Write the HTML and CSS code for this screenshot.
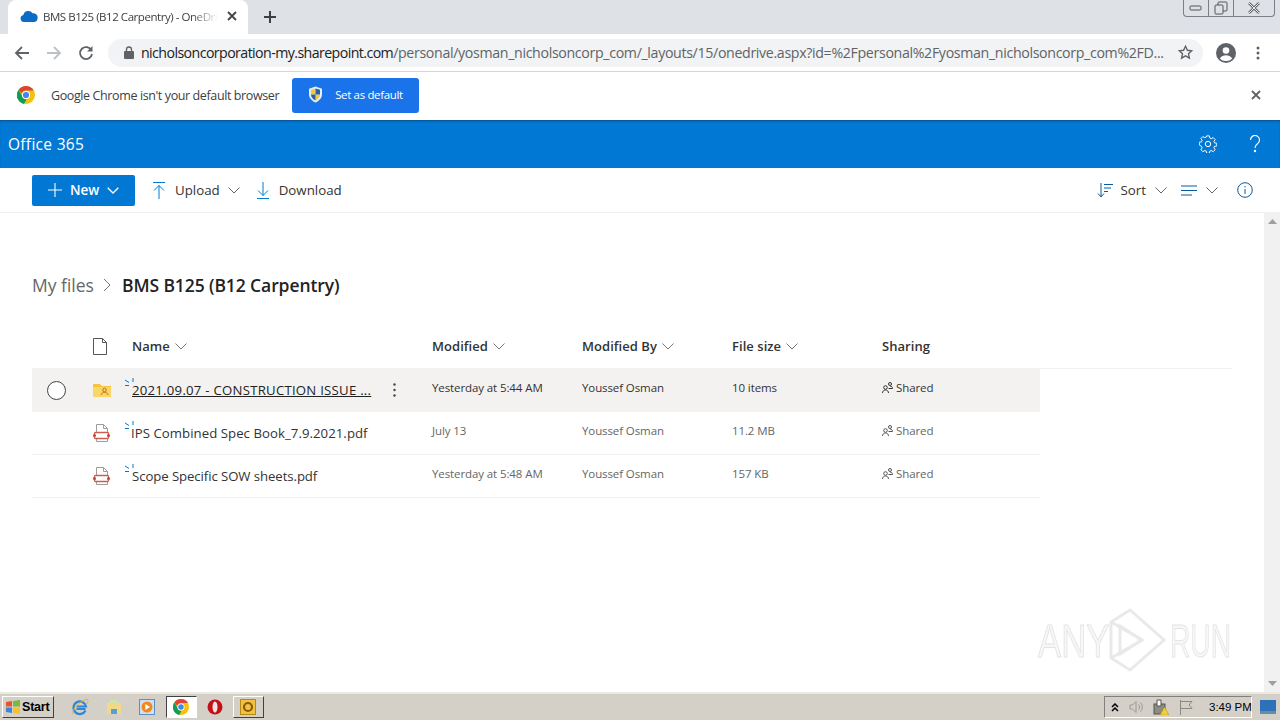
FILE: index.html
```html
<!DOCTYPE html>
<html lang="en">
  <head>
    <meta charset="UTF-8" />
    <title>BMS B125 (B12 Carpentry) - OneDrive</title>
    <link rel="stylesheet" href="styles.css">
  </head>
  <body>
    <div class="browser">
      <div class="tabbar">
        <div class="tab">
          <svg class="tab-icon" width="18" height="12" viewBox="0 0 18 12"><path d="M4 12a3.6 3.6 0 0 1-.6-7.1A5 5 0 0 1 12.500 3.200 4.400 4.400 0 0 1 17.500 8.500 3.500 3.500 0 0 1 14.500 12z" fill="#0a6cc4"/></svg>
          <span class="tab-title">BMS B125 (B12 Carpentry) - OneDrive</span>
          <svg class="tab-close" width="10" height="10" viewBox="0 0 10 10"><path d="M1 1l8 8M9 1l-8 8" stroke="#444" stroke-width="1.800"/></svg>
        </div>
        <svg class="tab-new" width="14" height="14" viewBox="0 0 14 14"><path d="M7 1v12M1 7h12" stroke="#3c4043" stroke-width="2"/></svg>
        <div class="win-buttons">
          <span class="win-btn min"><svg width="14" height="8" viewBox="0 0 14 8"><rect x="1" y="2" width="11" height="4" rx="1" fill="none" stroke="#555"/></svg></span>
          <span class="win-btn restore"><svg width="14" height="14" viewBox="0 0 14 14"><rect x="4" y="1" width="9" height="9" rx="1" fill="none" stroke="#555"/><rect x="1" y="4" width="8" height="9" rx="1" fill="#dee1e6" stroke="#555"/></svg></span>
          <span class="win-btn close"><svg width="14" height="12" viewBox="0 0 14 12"><path d="M2 1l10 10M12 1L2 11" stroke="#666" stroke-width="2.500"/><path d="M2 1l10 10M12 1L2 11" stroke="#eee" stroke-width="1"/></svg></span>
        </div>
      </div>
      <div class="toolbar">
        <svg class="nav-btn" width="16" height="14" viewBox="0 0 16 14"><path d="M15 7H2M8 1L2 7l6 6" fill="none" stroke="#5f6368" stroke-width="1.800"/></svg>
        <svg class="nav-btn" width="16" height="14" viewBox="0 0 16 14"><path d="M1 7h13M8 1l6 6-6 6" fill="none" stroke="#bdc1c6" stroke-width="1.800"/></svg>
        <svg class="nav-btn" width="16" height="16" viewBox="0 0 16 16"><path d="M13.500 5.500A6 6 0 1 0 14 9" fill="none" stroke="#5f6368" stroke-width="1.800"/><path d="M14.500 1v5.500H9z" fill="#5f6368"/></svg>
        <div class="omnibox">
          <svg class="lock" width="10" height="13" viewBox="0 0 10 13"><path d="M2.500 6V3.500a2.500 2.500 0 0 1 5 0V6" fill="none" stroke="#5f6368" stroke-width="1.300"/><rect y="5" width="10" height="8" rx="1" fill="#5f6368"/></svg>
          <span class="url"><b>nicholsoncorporation-my.sharepoint.com</b>/personal/yosman_nicholsoncorp_com/_layouts/15/onedrive.aspx?id=%2Fpersonal%2Fyosman_nicholsoncorp_com%2FD...</span>
          <svg class="star" width="15" height="15" viewBox="0 0 15 15"><path d="M7.500 1.300l1.900 4 4.300.5-3.200 3 .9 4.300-3.900-2.200-3.900 2.200.9-4.300-3.200-3 4.300-.5z" fill="none" stroke="#5f6368" stroke-width="1.400"/></svg>
        </div>
        <svg class="avatar" width="20" height="20" viewBox="0 0 20 20"><circle cx="10" cy="10" r="10" fill="#5f6368"/><circle cx="10" cy="7.500" r="3.300" fill="#fff"/><path d="M3.800 15.500c1.500-2.500 3.800-3.300 6.200-3.300s4.700.8 6.200 3.300A8 8 0 0 1 10 18a8 8 0 0 1-6.200-2.500z" fill="#fff"/></svg>
        <svg class="kebab" width="4" height="14" viewBox="0 0 4 14"><circle cx="2" cy="2" r="1.500" fill="#5f6368"/><circle cx="2" cy="7" r="1.500" fill="#5f6368"/><circle cx="2" cy="12" r="1.500" fill="#5f6368"/></svg>
      </div>
      <div class="infobar">
        <svg class="chrome-logo" width="18" height="18" viewBox="0 0 18 18"><circle cx="9" cy="9" r="9" fill="#f4c20d"/><path d="M9 0a9 9 0 0 1 7.800 4.500H9a4.500 4.500 0 0 0-4.200 3L1.700 3.700A9 9 0 0 1 9 0z" fill="#db4437"/><path d="M1.700 3.700L5.500 11a4.500 4.500 0 0 0 4 2.500L7 18A9 9 0 0 1 1.700 3.700z" fill="#0f9d58"/><circle cx="9" cy="9" r="4" fill="#fff"/><circle cx="9" cy="9" r="3.100" fill="#4285f4"/></svg>
        <span class="info-text">Google Chrome isn't your default browser</span>
        <button class="default-btn">
          <svg width="15" height="17" viewBox="0 0 15 17"><path d="M7.500.5l6.500 2.200V8.500c0 3.800-3.200 6.500-6.500 8-3.300-1.500-6.500-4.200-6.500-8V2.700z" fill="#e8eef6"/><path d="M7.500 2.500L3 3.700v4.800h4.500zM7.500 8.500V14.500c2.500-1.200 4.500-3.300 4.500-6z" fill="#f5cb3c"/><path d="M7.500 2.500l4.500 1.200v4.800H7.500zM7.500 8.500H3c0 2.700 2 4.800 4.500 6z" fill="#2a62a8"/></svg>
          <span>Set as default</span>
        </button>
        <svg class="info-close" width="10" height="10" viewBox="0 0 10 10"><path d="M1 1l8 8M9 1l-8 8" stroke="#5f6368" stroke-width="1.800"/></svg>
      </div>
    </div>

    <div class="suitebar">
      <span class="suite-name">Office 365</span>
      <div class="suite-icons">
        <svg width="18" height="18" viewBox="0 0 18 18" fill="none" stroke="#fff"><circle cx="9" cy="9" r="2.700"/><path d="M7.600 1h2.800l.4 2.200 1.500.7 2-1.200 2 2-1.200 2 .6 1.500 2.300.4v2.800l-2.300.4-.6 1.500 1.200 2-2 2-2-1.200-1.500.6-.4 2.300H7.600l-.4-2.300-1.500-.6-2 1.200-2-2 1.200-2-.6-1.500L0 10.400V7.600l2.300-.4.600-1.500-1.200-2 2-2 2 1.200 1.500-.7z" transform="scale(.97) translate(.3 -.1)"/></svg>
        <svg width="12" height="18" viewBox="0 0 12 18" fill="none" stroke="#fff" stroke-width="1.200"><path d="M1.500 5a4.500 4.500 0 1 1 7 3.700C7 9.700 6 10.500 6 13"/><circle cx="6" cy="16" r=".6" fill="#fff"/></svg>
      </div>
    </div>

    <div class="commandbar">
      <button class="new-btn">
        <svg width="14" height="14" viewBox="0 0 14 14"><path d="M7 0v14M0 7h14" stroke="#fff" stroke-width="1.100"/></svg>
        <span>New</span>
        <svg width="12" height="7" viewBox="0 0 12 7"><path d="M.7.700L6 6l5.300-5.300" fill="none" stroke="#fff" stroke-width="1.300"/></svg>
      </button>
      <div class="cmd cmd-upload">
        <svg width="14" height="17" viewBox="0 0 14 17" fill="none" stroke="#0078d4"><path d="M1 .5h12M7 17V3.500M2 8.500l5-5 5 5"/></svg>
        <span>Upload</span>
        <svg class="chev" width="12" height="7" viewBox="0 0 12 7"><path d="M.5.500L6 6l5.500-5.500" fill="none" stroke="#666"/></svg>
      </div>
      <div class="cmd cmd-download">
        <svg width="14" height="17" viewBox="0 0 14 17" fill="none" stroke="#0078d4"><path d="M1 16.500h12M7 0v13.500M2 8.500l5 5 5-5"/></svg>
        <span>Download</span>
      </div>
      <div class="cmd-right">
        <div class="cmd cmd-sort">
          <svg width="17" height="15" viewBox="0 0 17 15" fill="none" stroke="#0b5a9c"><path d="M4 0v13M1 10.500L4 14l3-3.500M7 1.500h9M7 5h7M7 8.500h4"/></svg>
          <span>Sort</span>
          <svg class="chev" width="12" height="7" viewBox="0 0 12 7"><path d="M.5.500L6 6l5.500-5.500" fill="none" stroke="#666"/></svg>
        </div>
        <div class="cmd cmd-view">
          <svg width="17" height="11" viewBox="0 0 17 11" fill="none" stroke="#0b5a9c"><path d="M0 1h16M0 5.500h16M0 10h11"/></svg>
          <svg class="chev" width="12" height="7" viewBox="0 0 12 7"><path d="M.5.500L6 6l5.500-5.500" fill="none" stroke="#666"/></svg>
        </div>
        <svg class="cmd-info" width="16" height="16" viewBox="0 0 16 16" fill="none" stroke="#0b5a9c"><circle cx="8" cy="8" r="7.300"/><path d="M8 7v5M8 4v1.500"/></svg>
      </div>
    </div>

    <div class="content">
      <main class="files">
        <div class="breadcrumb">
          <span class="crumb">My files</span>
          <svg width="9" height="14" viewBox="0 0 9 14"><path d="M1 1l6 6-6 6" fill="none" stroke="#777"/></svg>
          <span class="crumb-current">BMS B125 (B12 Carpentry)</span>
        </div>

        <div class="list-head">
          <span class="col-select"></span>
          <span class="col-icon"><svg width="14" height="17" viewBox="0 0 14 17"><path d="M.5.500h9l4 4v12H.5z" fill="none" stroke="#555"/><path d="M9.500.500v4h4" fill="none" stroke="#555"/></svg></span>
          <span class="col-name head-cell">Name <svg width="12" height="7" viewBox="0 0 12 7"><path d="M.5.500L6 6l5.500-5.500" fill="none" stroke="#777"/></svg></span>
          <span class="col head-cell">Modified <svg width="12" height="7" viewBox="0 0 12 7"><path d="M.5.500L6 6l5.500-5.500" fill="none" stroke="#777"/></svg></span>
          <span class="col head-cell">Modified By <svg width="12" height="7" viewBox="0 0 12 7"><path d="M.5.500L6 6l5.500-5.500" fill="none" stroke="#777"/></svg></span>
          <span class="col head-cell">File size <svg width="12" height="7" viewBox="0 0 12 7"><path d="M.5.500L6 6l5.500-5.500" fill="none" stroke="#777"/></svg></span>
          <span class="col head-cell">Sharing</span>
        </div>

        <div class="row row-active">
          <span class="col-select"><i class="radio"></i></span>
          <span class="col-icon">
            <svg width="18" height="14" viewBox="0 0 18 14"><path d="M0 1h7l2 2h9v11H0z" fill="#f6c33f"/><path d="M0 4h18v10H0z" fill="#fbd568"/><circle cx="11.500" cy="7" r="1.800" fill="none" stroke="#b5761a"/><path d="M8 12c.5-2 2-2.700 3.500-2.700S14.500 10 15 12" fill="none" stroke="#b5761a"/></svg>
          </span>
          <span class="col-name name-cell">
            <svg class="new-mark" width="9" height="9" viewBox="0 0 9 9"><path d="M8 0v4M0 2l4 2.500M0 7.500h4" stroke="#0078d4"/></svg>
            <a class="file-link active-link">2021.09.07 - CONSTRUCTION ISSUE ...</a>
            <svg class="row-more" width="3" height="14" viewBox="0 0 3 14"><circle cx="1.500" cy="1.500" r="1.200" fill="#444"/><circle cx="1.500" cy="7" r="1.200" fill="#444"/><circle cx="1.500" cy="12.500" r="1.200" fill="#444"/></svg>
          </span>
          <span class="col cell-dark">Yesterday at 5:44 AM</span>
          <span class="col cell-dark">Youssef Osman</span>
          <span class="col cell-dark">10 items</span>
          <span class="col cell-dark shared"><svg width="11" height="11" viewBox="0 0 11 11" fill="none" stroke="#333"><circle cx="3.500" cy="5.500" r="1.800"/><path d="M.5 11c0-1.800 1.300-3 3-3s3 1.200 3 3"/><circle cx="8" cy="2" r="1.500"/><path d="M6.500 6.500h4c0-1.500-1-2.500-2.500-2.500"/></svg>Shared</span>
        </div>

        <div class="row">
          <span class="col-select"></span>
          <span class="col-icon">
            <svg width="17" height="18" viewBox="0 0 17 18"><path d="M3.500.500h7l4 4v13h-11z" fill="#fff" stroke="#a09a9a"/><path d="M10.500.500v4h4" fill="none" stroke="#a09a9a"/><rect x="1.500" y="8.500" width="14" height="6" rx="1" fill="#fff" stroke="#c9604f" stroke-width="1.300"/><rect y="10" width="3" height="3" rx="1.500" fill="#c8402f"/><rect x="14" y="10" width="3" height="3" rx="1.500" fill="#c8402f"/></svg>
          </span>
          <span class="col-name name-cell">
            <svg class="new-mark" width="9" height="9" viewBox="0 0 9 9"><path d="M8 0v4M0 2l4 2.500M0 7.500h4" stroke="#0078d4"/></svg>
            <a class="file-link link-wide">IPS Combined Spec Book_7.9.2021.pdf</a>
          </span>
          <span class="col">July 13</span>
          <span class="col">Youssef Osman</span>
          <span class="col">11.2 MB</span>
          <span class="col shared"><svg width="11" height="11" viewBox="0 0 11 11" fill="none" stroke="#555"><circle cx="3.500" cy="5.500" r="1.800"/><path d="M.5 11c0-1.800 1.300-3 3-3s3 1.200 3 3"/><circle cx="8" cy="2" r="1.500"/><path d="M6.500 6.500h4c0-1.500-1-2.500-2.500-2.500"/></svg>Shared</span>
        </div>

        <div class="row">
          <span class="col-select"></span>
          <span class="col-icon">
            <svg width="17" height="18" viewBox="0 0 17 18"><path d="M3.500.500h7l4 4v13h-11z" fill="#fff" stroke="#a09a9a"/><path d="M10.500.500v4h4" fill="none" stroke="#a09a9a"/><rect x="1.500" y="8.500" width="14" height="6" rx="1" fill="#fff" stroke="#c9604f" stroke-width="1.300"/><rect y="10" width="3" height="3" rx="1.500" fill="#c8402f"/><rect x="14" y="10" width="3" height="3" rx="1.500" fill="#c8402f"/></svg>
          </span>
          <span class="col-name name-cell">
            <svg class="new-mark" width="9" height="9" viewBox="0 0 9 9"><path d="M8 0v4M0 2l4 2.500M0 7.500h4" stroke="#0078d4"/></svg>
            <a class="file-link">Scope Specific SOW sheets.pdf</a>
          </span>
          <span class="col">Yesterday at 5:48 AM</span>
          <span class="col">Youssef Osman</span>
          <span class="col">157 KB</span>
          <span class="col shared"><svg width="11" height="11" viewBox="0 0 11 11" fill="none" stroke="#555"><circle cx="3.500" cy="5.500" r="1.800"/><path d="M.5 11c0-1.800 1.300-3 3-3s3 1.200 3 3"/><circle cx="8" cy="2" r="1.500"/><path d="M6.500 6.500h4c0-1.500-1-2.500-2.500-2.500"/></svg>Shared</span>
        </div>
      </main>
      <div class="scrollbar">
        <svg width="9" height="5" viewBox="0 0 9 5"><path d="M4.500 0L9 5H0z" fill="#a0a0a0"/></svg>
        <svg width="9" height="5" viewBox="0 0 9 5"><path d="M4.500 5L9 0H0z" fill="#a0a0a0"/></svg>
      </div>
    </div>

    <div class="watermark">
      <span class="wm-any">ANY</span>
      <svg width="58" height="64" viewBox="0 0 58 64" fill="none" stroke="#e9e9e9" stroke-width="3"><path d="M3 14L22 2l34 30-34 30L3 50z"/><path d="M12 18v28l22-14z"/><path d="M3 14l31 18M3 50l31-18"/></svg>
      <span class="wm-run">RUN</span>
    </div>

    <footer class="taskbar">
      <button class="start-btn">
        <svg width="16" height="14" viewBox="0 0 16 14"><path d="M1 2l6-1v5.500H1z" fill="#e2572b"/><path d="M8 1l7-1v6.500H8z" fill="#7db83e"/><path d="M1 7.500h6V13l-6-1z" fill="#3a87d6"/><path d="M8 7.500h7V14l-7-1z" fill="#f5c12e"/></svg>
        <span>Start</span>
      </button>
      <div class="quick">
        <svg width="18" height="18" viewBox="0 0 18 18"><path d="M14.500 12.500A6.300 6.300 0 1 1 15 8.500H5.500M5.500 11h9" fill="none" stroke="#2f86d4" stroke-width="2.200"/><path d="M2 16C0 12 9 3 16 1c1.500 1 1 3 0 5" fill="none" stroke="#e2b53a"/></svg>
        <svg width="16" height="16" viewBox="0 0 16 16"><path d="M1 4h14v11H1z" fill="#f2d98a"/><path d="M4 1h8v4H4z" fill="#cfe2a8"/><path d="M5 10h6v5H5z" fill="#5a9fd4"/></svg>
        <svg width="16" height="16" viewBox="0 0 16 16"><rect x=".5" y=".5" width="15" height="15" fill="#cfe0f2" stroke="#5a8fc8"/><circle cx="8" cy="8" r="5.500" fill="#ef8a1f"/><path d="M6.300 5v6L11 8z" fill="#fff"/></svg>
        <span class="task-btn task-active">
          <svg width="16" height="16" viewBox="0 0 18 18"><circle cx="9" cy="9" r="9" fill="#f4c20d"/><path d="M9 0a9 9 0 0 1 7.800 4.500H9a4.500 4.500 0 0 0-4.200 3L1.700 3.700A9 9 0 0 1 9 0z" fill="#db4437"/><path d="M1.700 3.700L5.500 11a4.500 4.500 0 0 0 4 2.500L7 18A9 9 0 0 1 1.700 3.700z" fill="#0f9d58"/><circle cx="9" cy="9" r="4" fill="#fff"/><circle cx="9" cy="9" r="3.100" fill="#4285f4"/></svg>
        </span>
        <svg width="16" height="16" viewBox="0 0 16 16"><circle cx="8" cy="8" r="7.500" fill="#c4101a"/><ellipse cx="8" cy="8" rx="2.500" ry="5.500" fill="#f6e3e0"/></svg>
        <span class="task-btn">
          <svg width="16" height="16" viewBox="0 0 16 16"><rect x=".5" y=".5" width="15" height="15" fill="#f2c23a" stroke="#b58a1a"/><circle cx="8" cy="8" r="4" fill="none" stroke="#8a5a10" stroke-width="2.200"/></svg>
        </span>
      </div>
      <div class="tray">
        <svg width="8" height="9" viewBox="0 0 8 9"><path d="M1 4l3-3 3 3M1 8l3-3 3 3" fill="none" stroke="#000" stroke-width="1.500"/></svg>
        <svg width="15" height="14" viewBox="0 0 15 14" fill="none" stroke="#999"><path d="M1 5h2.500L7 1.500v11L3.500 9H1z"/><path d="M9.500 4.500a3.500 3.500 0 0 1 0 5M11.500 2.500a6.500 6.500 0 0 1 0 9"/></svg>
        <svg width="16" height="16" viewBox="0 0 16 16"><rect x="1" y="5" width="11" height="10" fill="#8c8c80" stroke="#555"/><path d="M4 1h4v6H4z" fill="#fff" stroke="#555"/><path d="M11.500 8L16 16H7z" fill="#f5cf3a" stroke="#a88a10" stroke-width=".5"/></svg>
        <svg width="14" height="15" viewBox="0 0 14 15" fill="none" stroke="#8a8a80"><path d="M1.500 0v15M1.500 1.500H13l-3 3.500 3 3.500H1.500"/></svg>
        <span class="clock">3:49 PM</span>
      </div>
      <svg class="show-desktop" width="16" height="14" viewBox="0 0 16 14"><rect width="16" height="11" fill="#2b72b8"/><rect y="11" width="16" height="3" fill="#6a8aa8"/></svg>
    </footer>
  </body>
</html>
```

FILE: styles.css
```css
* {
  box-sizing: border-box;
}
body {
  margin: 0;
  width: 1280px;
  height: 720px;
  overflow: hidden;
  position: relative;
  display: flex;
  flex-direction: column;
  background: white;
  font-family: "Open Sans", sans-serif;
  color: #222;
}
svg {
  display: block;
  flex-shrink: 0;
}

/* browser chrome */
.tabbar {
  height: 34px;
  background: #dee1e6;
  display: flex;
  align-items: flex-end;
  padding-left: 8px;
  position: relative;
}
.tab {
  width: 240px;
  height: 34px;
  background: white;
  border-radius: 8px 8px 0 0;
  display: flex;
  align-items: center;
  padding: 0 11px 2px 12px;
}
.tab-icon {
  margin-right: 5px;
}
.tab-title {
  flex: 1;
  font-size: 11.5px;
  letter-spacing: -0.45px;
  color: #3c4043;
  white-space: nowrap;
  overflow: hidden;
  -webkit-mask-image: linear-gradient(to right, black 85%, transparent 100%);
  mask-image: linear-gradient(to right, black 85%, transparent 100%);
  margin-right: 9px;
}
.tab-new {
  margin: 0 0 10px 15px;
}
.win-buttons {
  position: absolute;
  top: 0;
  right: 5px;
  width: 92px;
  height: 17px;
  display: flex;
  border: 1px solid #7a7f85;
  border-top: none;
  border-radius: 0 0 4px 4px;
}
.win-btn {
  display: flex;
  align-items: center;
  justify-content: center;
}
.min {
  width: 25px;
  border-right: 1px solid #7a7f85;
}
.restore {
  width: 25px;
  border-right: 1px solid #7a7f85;
}
.close {
  flex: 1;
}
.toolbar {
  height: 38px;
  background: white;
  border-bottom: 1px solid #d5d6d8;
  display: flex;
  align-items: center;
  padding-left: 14px;
}
.toolbar .nav-btn {
  margin-right: 16px;
}
.omnibox {
  width: 1095px;
  height: 28px;
  margin-left: -2px;
  background: #f1f3f4;
  border-radius: 14px;
  display: flex;
  align-items: center;
  padding: 0 10px 0 16px;
}
.lock {
  margin-right: 7px;
}
.url {
  flex: 1;
  font-size: 14.2px;
  letter-spacing: -0.34px;
  color: #5f6368;
  white-space: nowrap;
}
.url b {
  font-weight: 400;
  letter-spacing: -0.58px;
  color: #202124;
}
.star {
  margin-left: 12px;
}
.avatar {
  margin-left: 13px;
}
.kebab {
  margin-left: 20px;
}
.infobar {
  height: 48px;
  background: white;
  display: flex;
  align-items: center;
  padding: 0 19px 2px 17px;
}
.info-text {
  margin-left: 16px;
  font-size: 12.5px;
  letter-spacing: -0.39px;
  color: #3c4043;
  white-space: nowrap;
}
.default-btn {
  width: 127px;
  height: 35px;
  margin-left: 13px;
  border: none;
  border-radius: 3px;
  background: #1a73e8;
  color: white;
  font: 11.5px "Open Sans", sans-serif;
  letter-spacing: -0.35px;
  display: flex;
  align-items: center;
  padding: 0 0 2px 16px;
  gap: 12px;
}
.info-close {
  margin-left: auto;
}

/* office header */
.suitebar {
  height: 48px;
  background: #0078d4;
  box-shadow: inset 0 2px 2px -1px #0a4f86;
  display: flex;
  align-items: center;
  justify-content: space-between;
  padding: 0 19px 0 8px;
  color: white;
}
.suite-name {
  font-size: 15.5px;
  font-weight: 500;
  letter-spacing: 0.3px;
}
.suite-icons {
  display: flex;
  align-items: center;
  gap: 32px;
}
.commandbar {
  height: 45px;
  border-bottom: 1px solid #f0f0f0;
  display: flex;
  align-items: center;
  padding: 0 27px 0 32px;
  font-size: 13.3px;
  color: #333;
}
.new-btn {
  width: 103px;
  height: 31px;
  background: #0078d4;
  color: white;
  border: none;
  border-radius: 2px;
  font: 600 13.5px "Open Sans", sans-serif;
  display: flex;
  align-items: center;
  padding: 0 0 0 16px;
  gap: 8px;
}
.cmd {
  display: flex;
  align-items: center;
}
.cmd-upload {
  margin-left: 17px;
}
.cmd-upload span {
  margin: 0 8px 0 9px;
}
.cmd-download {
  margin-left: 16px;
}
.cmd-download span {
  margin-left: 9px;
}
.cmd-right {
  margin-left: auto;
  display: flex;
  align-items: center;
}
.cmd-sort span {
  margin: 0 9px 0 7px;
}
.cmd-view {
  margin-left: 14px;
  gap: 8px;
}
.cmd-info {
  margin-left: 19px;
}

/* file list */
.content {
  flex: 1;
  display: flex;
  min-height: 0;
}
.files {
  flex: 1;
  padding: 56px 32px 0;
}
.breadcrumb {
  display: flex;
  align-items: center;
  height: 32px;
  margin-bottom: 20px;
}
.crumb {
  font-size: 17.5px;
  color: #666;
}
.breadcrumb svg {
  margin: 0 10px 0 9px;
}
.crumb-current {
  font-size: 17.5px;
  font-weight: 600;
  color: #222;
  letter-spacing: -0.1px;
}
.list-head {
  height: 48px;
  padding-top: 3px;
  display: grid;
  grid-template-columns: 60px 40px 300px 150px 150px 150px 1fr;
  align-items: center;
  border-bottom: 1px solid #f2f2f2;
}
.row {
  width: 1008px;
  height: 43px;
  display: grid;
  grid-template-columns: 60px 40px 300px 150px 150px 150px 1fr;
  align-items: center;
  border-bottom: 1px solid #f3f2f1;
  font-size: 11.5px;
  color: #666;
  letter-spacing: -0.1px;
}
.row-active {
  background: #f3f2f1;
}
.head-cell {
  font-size: 13px;
  font-weight: 600;
  color: #333;
  display: flex;
  align-items: center;
  gap: 5px;
  letter-spacing: 0.05px;
}
.col-select {
  display: flex;
  justify-content: center;
  padding-right: 12px;
}
.radio {
  width: 19px;
  height: 19px;
  border: 1px solid #444;
  border-radius: 50%;
  background: white;
}
.col-icon {
  display: flex;
  padding-left: 1px;
}
.name-cell {
  position: relative;
  display: flex;
  align-items: center;
  font-size: 13.2px;
  color: #333;
}
.new-mark {
  position: absolute;
  left: -7px;
  top: -3px;
}
.file-link {
  white-space: nowrap;
  letter-spacing: -0.08px;
}
.link-wide {
  margin-left: -1px;
  letter-spacing: 0.05px;
}
.active-link {
  text-decoration: underline;
  color: #222;
  letter-spacing: 0.24px;
}
.row-more {
  position: absolute;
  left: 261px;
  top: 2px;
}
.cell-dark {
  color: #333;
}
.col {
  white-space: nowrap;
}
.row .col {
  padding-bottom: 6px;
}
.shared {
  display: flex;
  align-items: center;
  gap: 3px;
}
.scrollbar {
  width: 16px;
  background: #f1f1f1;
  display: flex;
  flex-direction: column;
  justify-content: space-between;
  align-items: center;
  padding: 6px 0;
}

/* watermark sits over the page */
.watermark {
  position: absolute;
  left: 1038px;
  top: 608px;
  display: flex;
  align-items: center;
  font: 47px "Liberation Sans", sans-serif;
  color: #f7f7f7;
  -webkit-text-stroke: 1px #e4e4e4;
}
.wm-any {
  width: 70px;
  transform: scaleX(0.74);
  transform-origin: left center;
}
.wm-run {
  width: 62px;
  margin-left: 4px;
  transform: scaleX(0.6);
  transform-origin: left center;
}

/* windows taskbar */
.taskbar {
  height: 28px;
  background: #d4d0c8;
  border-top: 2px solid #ece9e0;
  display: flex;
  align-items: center;
  padding: 0 4px 0 2px;
}
.start-btn {
  width: 52px;
  height: 22px;
  background: #d4d0c8;
  border: 1px solid;
  border-color: #fff #404040 #404040 #fff;
  display: flex;
  align-items: center;
  padding: 0 0 0 2px;
  gap: 1px;
  font: 700 12.5px "Liberation Sans", sans-serif;
  letter-spacing: -0.2px;
  color: #000;
}
.quick {
  display: flex;
  align-items: center;
  margin-left: 17px;
  gap: 17.2px;
}
.task-btn {
  width: 31px;
  height: 22px;
  display: flex;
  align-items: center;
  justify-content: center;
  margin: 0 -7px;
  border: 1px solid;
  border-color: #fff #404040 #404040 #fff;
}
.task-active {
  background: white;
  border-color: #404040 #fff #fff #404040;
}
.tray {
  margin-left: auto;
  height: 22px;
  width: 148px;
  display: flex;
  align-items: center;
  border: 1px solid;
  border-color: #808080 #fff #fff #808080;
  padding-left: 6px;
  gap: 9.5px;
}
.clock {
  white-space: nowrap;
  margin-left: 7px;
  font: 11.5px "Liberation Sans", sans-serif;
  color: #000;
}
.show-desktop {
  margin-left: 8px;
}
```
